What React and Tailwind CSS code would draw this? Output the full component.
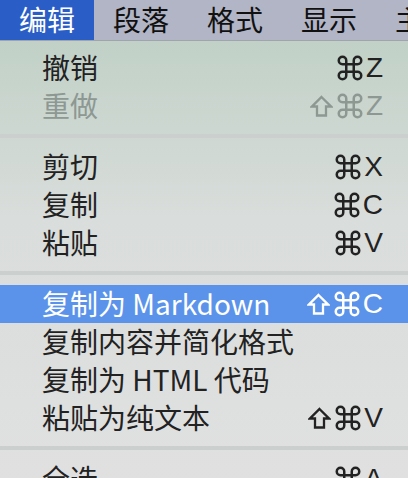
import React from 'react';
import { Command } from 'lucide-react';

const font = { fontFamily: '"Noto Sans CJK SC", "Noto Sans", sans-serif' };

function Shift() {
  return (
    <svg width="23" height="22" viewBox="0 0 23 22" fill="none" stroke="currentColor" strokeWidth="2.3" strokeLinejoin="miter">
      <path d="M11.5 2 L21 11.5 H16 V20.5 H7 V11.5 H2 Z" />
    </svg>
  );
}

function Keys({ shift, letter }) {
  return (
    <span className="flex items-center">
      {shift && <Shift />}
      <Command size={30} strokeWidth={2} className={shift ? 'ml-[2px]' : ''} />
      <span className="ml-[1px] text-[28px] leading-none" style={{ fontFamily: '"Liberation Sans", Arial, sans-serif' }}>
        {letter}
      </span>
    </span>
  );
}

function Row({ label, shift, letter, disabled, active }) {
  const color = active ? 'bg-[#5b93ea] text-white' : disabled ? 'text-[#8d9893]' : 'text-[#222]';
  return (
    <div className={`flex h-[38px] items-center justify-between pl-[42px] pr-[25px] text-[28px] leading-none ${color}`}>
      <span className="-mt-[3px]">{label}</span>
      {letter && <Keys shift={shift} letter={letter} />}
    </div>
  );
}

function Sep() {
  return (
    <div className="h-[23px] pt-[9px]">
      <div className="h-[4px] bg-[#cbcfce]" />
    </div>
  );
}

export default function App() {
  const menus = ['编辑', '段落', '格式', '显示', '主题'];
  return (
    <div className="h-[478px] w-[408px] overflow-hidden" style={font}>
      <div className="flex h-[41px] border-b border-[#9fa5ad] bg-[#b1b5c5] text-[28px] leading-none text-[#111]">
        {menus.map((m, i) => (
          <div
            key={m}
            className={`flex shrink-0 items-center px-[19px] pb-[3px] ${i === 0 ? 'bg-[#2a5ec6] text-white' : ''}`}
          >
            {m}
          </div>
        ))}
      </div>
      <div className="h-[437px] bg-gradient-to-b from-[#c1d1c7] via-[#d9dddb] via-40% to-[#e0e0e1] pt-[8px]">
        <Row label="撤销" letter="Z" />
        <Row label="重做" shift letter="Z" disabled />
        <Sep />
        <Row label="剪切" letter="X" />
        <Row label="复制" letter="C" />
        <Row label="粘贴" letter="V" />
        <Sep />
        <Row label="复制为 Markdown" shift letter="C" active />
        <Row label="复制内容并简化格式" />
        <Row label="复制为 HTML 代码" />
        <Row label="粘贴为纯文本" shift letter="V" />
        <Sep />
        <Row label="全选" letter="A" />
      </div>
    </div>
  );
}
